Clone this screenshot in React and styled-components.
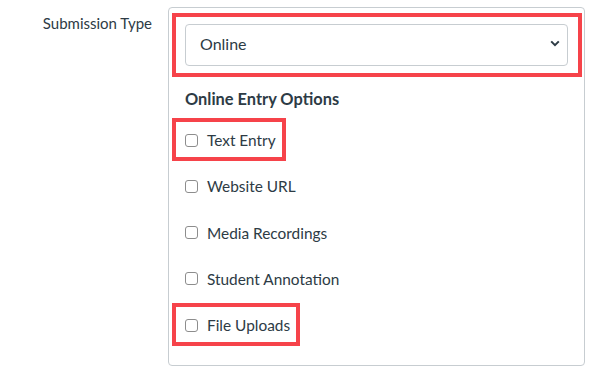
import React from "react";
import styled, { createGlobalStyle } from "styled-components";

const Global = createGlobalStyle`
  html, body { margin: 0; padding: 0; background: #ffffff; }
  body { font-family: Lato, "Noto Sans", sans-serif; color: #2d3b45; }
  * { box-sizing: border-box; }
`;

const Page = styled.div`
  width: 610px;
  height: 377px;
  padding-top: 7px;
  display: flex;
  align-items: flex-start;
  gap: 16px;
`;

const FieldLabel = styled.label`
  width: 152px;
  flex: none;
  text-align: right;
  font-size: 15px;
  line-height: 21px;
  padding-top: 6px;
  color: #2d3b45;
`;

const Panel = styled.div`
  width: 417px;
  height: 359px;
  border: 1px solid #c7cdd1;
  border-radius: 4px;
  padding: 16px 16px 0;
  display: flex;
  flex-direction: column;
  align-items: flex-start;
`;

const Highlight = styled.div`
  position: relative;
  display: ${(p) => (p.$block ? "block" : "inline-flex")};
  align-self: ${(p) => (p.$block ? "stretch" : "flex-start")};
  &::after {
    content: "";
    position: absolute;
    top: ${(p) => p.$t}px;
    right: ${(p) => p.$r}px;
    bottom: ${(p) => p.$b}px;
    left: ${(p) => p.$l}px;
    border: 4px solid #f6434a;
    pointer-events: none;
  }
`;

const SelectWrap = styled.div`
  position: relative;
  width: 383px;
  height: 42px;
`;

const Select = styled.select`
  appearance: none;
  width: 100%;
  height: 100%;
  border: 1px solid #c7cdd1;
  border-radius: 4px;
  background: #ffffff;
  padding: 0 14px 3px;
  font-family: Lato, "Noto Sans", sans-serif;
  font-size: 16px;
  color: #2d3b45;
  outline: none;
`;

const Chevron = styled.svg`
  position: absolute;
  right: 8px;
  top: 16px;
  width: 10px;
  height: 7px;
  pointer-events: none;
`;

const Heading = styled.h3`
  margin: 21px 0 0;
  font-size: 16.4px;
  line-height: 24px;
  font-weight: 700;
  color: #2d3b45;
`;

const Options = styled.div`
  margin-top: 17px;
  display: flex;
  flex-direction: column;
  align-items: flex-start;
  gap: 22.3px;
`;

const Row = styled.label`
  display: inline-flex;
  align-items: center;
  gap: 9px;
  height: 24px;
  font-size: 15.4px;
  color: #2d3b45;
  cursor: pointer;
`;

const Box = styled.input.attrs({ type: "checkbox" })`
  appearance: none;
  margin: 0;
  width: 13px;
  height: 13px;
  border: 1.5px solid #8d8d8d;
  border-radius: 3px;
  background: #fff;
  flex: none;
`;

const options = [
  { label: "Text Entry", hl: true },
  { label: "Website URL" },
  { label: "Media Recordings" },
  { label: "Student Annotation" },
  { label: "File Uploads", hl: true },
];

function Option({ label }) {
  return (
    <Row>
      <Box />
      <span>{label}</span>
    </Row>
  );
}

export default function App() {
  return (
    <>
      <Global />
      <Page>
        <FieldLabel>Submission Type</FieldLabel>
        <Panel>
          <Highlight $block $t={-11} $r={-14} $b={-11} $l={-13}>
            <SelectWrap>
              <Select defaultValue="online">
                <option value="online">Online</option>
              </Select>
              <Chevron viewBox="0 0 10 7">
                <path d="M1.2 1.4 L5 5.2 L8.8 1.4" fill="none" stroke="#2d3b45" strokeWidth="2" />
              </Chevron>
            </SelectWrap>
          </Highlight>
          <Heading>Online Entry Options</Heading>
          <Options>
            {options.map((o) =>
              o.hl ? (
                <Highlight key={o.label} $t={-10} $r={-10} $b={-9} $l={-13}>
                  <Option label={o.label} />
                </Highlight>
              ) : (
                <Option key={o.label} label={o.label} />
              )
            )}
          </Options>
        </Panel>
      </Page>
    </>
  );
}
